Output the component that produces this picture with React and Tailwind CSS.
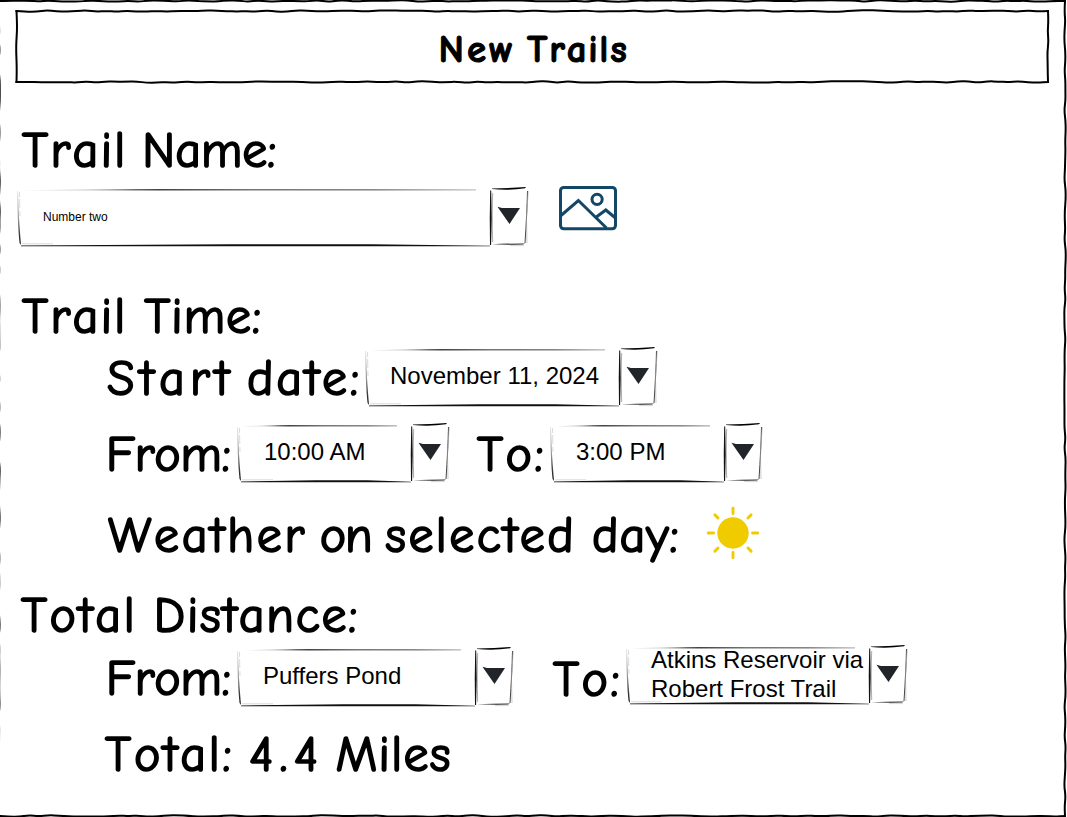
import React from "react";

const hand = "font-['Comic_Sans_MS','Comic_Neue',Inter,sans-serif] [font-kerning:none] [font-variant-ligatures:none] whitespace-nowrap";

// Deterministic wobble used for the hand-drawn outlines
function wobble(x1, y1, x2, y2, seed, amp = 0.8) {
  const len = Math.hypot(x2 - x1, y2 - y1);
  const n = Math.max(2, Math.round(len / 10));
  const vertical = x1 === x2;
  const pts = [];
  let s = seed;
  for (let i = 0; i <= n; i++) {
    s = (s * 16807) % 2147483647;
    const d = i === 0 || i === n ? 0 : (s / 2147483647 - 0.5) * 2 * amp;
    const x = x1 + ((x2 - x1) * i) / n + (vertical ? d : 0);
    const y = y1 + ((y2 - y1) * i) / n + (vertical ? 0 : d);
    pts.push([x, y]);
  }
  let path = `M${pts[0][0]} ${pts[0][1]}`;
  for (let i = 1; i < pts.length - 1; i++) {
    const mx = (pts[i][0] + pts[i + 1][0]) / 2;
    const my = (pts[i][1] + pts[i + 1][1]) / 2;
    path += ` Q${pts[i][0].toFixed(2)} ${pts[i][1].toFixed(2)} ${mx.toFixed(2)} ${my.toFixed(2)}`;
  }
  return path + ` L${x2} ${y2}`;
}

function SketchRect({ x, y, w, h, seed }) {
  return (
    <g fill="none" stroke="#000" strokeWidth="2" strokeLinecap="square">
      <path d={wobble(x, y, x + w, y, seed)} />
      <path d={wobble(x + w, y, x + w, y + h, seed + 911)} />
      <path d={wobble(x, y + h, x + w, y + h, seed + 2027)} />
      <path d={wobble(x, y, x, y + h, seed + 3511)} />
    </g>
  );
}

function Select({ id, w, children, textClass }) {
  const b = w;
  return (
    <div className="relative flex h-[58px] shrink-0">
      <svg className="absolute top-0 -left-px overflow-visible" width={w + 38} height="58">
        <defs>
          <linearGradient id={`${id}t`} gradientUnits="userSpaceOnUse" x1="0" x2={w} y1="0" y2="0">
            <stop offset="0" stopColor="#ddd" />
            <stop offset="0.15" stopColor="#bbb" />
            <stop offset="0.3" stopColor="#444" />
            <stop offset="0.5" stopColor="#777" />
            <stop offset="0.75" stopColor="#777" />
            <stop offset="1" stopColor="#ccc" />
          </linearGradient>
          <linearGradient id={`${id}l`} x1="0" x2="0" y1="0" y2="1">
            <stop offset="0" stopColor="#ddd" />
            <stop offset="0.5" stopColor="#999" />
            <stop offset="1" stopColor="#000" />
          </linearGradient>
        </defs>
        <path d={`M5 2.3L${w * 0.25} 1.1L${w * 0.5} 1.1L${w - 14} 1.2V2.6L${w * 0.55} 2.4L${w * 0.25} 2.5Z`} fill={`url(#${id}t)`} />
        <path d="M0.3 3L1 3Q1.6 30 3.9 57L2.6 55Q0.5 38 0.3 3Z" fill={`url(#${id}l)`} />
        <path d="M2.5 4L3 30" stroke="#ccc" strokeWidth="0.7" strokeDasharray="5 2 9 3" />
        <path d={`M4 57.5L${w * 0.45} 56.2L${w * 0.75} 56.2L${w} 57.7V58.3L${w * 0.6} 58.2L4 58.2Z`} fill="#111" />
        <path d="M5 55.8H36" stroke="#ccc" strokeWidth="0.7" />
        <path d={`M${b + 0.2} 2.5Q${b - 0.6} 30 ${b} 57L${b + 1.1} 57Q${b + 2.4} 30 ${b + 1.2} 2.5Z`} fill="#111" />
        <path d={`M${b + 2.7} 5Q${b + 1.8} 26 ${b + 2.7} 54`} stroke="#888" strokeWidth="0.7" fill="none" />
        <path d={`M${b + 2} 0.4Q${b + 20} 0.2 ${b + 36} -1L${b + 35} 0.3Q${b + 18} 2.8 ${b + 2} 1Z`} fill="#000" />
        <path d={`M${b + 37.5} 3Q${b + 37} 25 ${b + 35} 55`} stroke="#444" strokeWidth="1" fill="none" />
        <path d={`M${b + 38.3} 3Q${b + 35.2} 28 ${b + 37} 55`} stroke="#aaa" strokeWidth="0.6" fill="none" />
        <path d={`M${b + 2} 56.3Q${b + 18} 55.4 ${b + 35} 55.4L${b + 33} 56.6Q${b + 18} 57 ${b + 2} 56.3Z`} fill="#222" />
        <path d={`M${b + 20} 57.6H${b + 34}`} stroke="#bbb" strokeWidth="0.6" />
        <path d={`M${b + 7.5} 18.8L${b + 12} 20.1L${b + 30} 20.1L${b + 19.5} 36L${b + 9} 21Z`} fill="#212529" />
      </svg>
      <div
        className={`flex items-center font-['Liberation_Sans',Arial,sans-serif] whitespace-nowrap text-black ${textClass}`}
        style={{ width: w }}
      >
        {children}
      </div>
      <div className="w-[38px]" />
    </div>
  );
}

function PictureIcon() {
  return (
    <svg width="60" height="46" viewBox="0 0 60 46" fill="none" stroke="#134767" strokeWidth="3">
      <rect x="2.5" y="2.4" width="55" height="41.4" rx="3.2" />
      <path d="M3 30.5L20.4 15.5L48.5 43M38.3 32L47.8 25L57.5 33" />
      <circle cx="39.1" cy="14.3" r="5.1" />
    </svg>
  );
}

function SunIcon() {
  return (
    <svg width="54" height="54" viewBox="-27 -27 54 54" stroke="#f0cb00" strokeWidth="2.9" strokeLinecap="round">
      <circle r="15.7" fill="#f0cb00" stroke="none" />
      {[0, 90, 180, 270].map((a) => (
        <path key={a} d="M0 -19.5V-24.8" transform={`rotate(${a})`} />
      ))}
      {[45, 135, 225, 315].map((a) => (
        <path key={a} d="M0 -21.2V-25.6" transform={`rotate(${a})`} />
      ))}
    </svg>
  );
}

function Label({ className = "", children }) {
  return (
    <div
      className={`${hand} h-[58px] shrink-0 pt-[2px] text-[50px] leading-[58px] text-black [-webkit-text-stroke:1.7px_black] ${className}`}
    >
      {children}
    </div>
  );
}

export default function App() {
  return (
    <main className="relative h-[817px] w-[1067px] overflow-hidden bg-white">
      <svg className="absolute inset-0" width="1067" height="817">
        <SketchRect x={-1} y={1} w={1066} h={815} seed={7331} />
        <SketchRect x={16.5} y={11} w={1031.5} h={71} seed={4219} />
      </svg>
      <div className="relative flex flex-col">
        <header className="mx-4 mt-[11px] flex h-[71px] items-center justify-center">
          <h1 className={`${hand} mt-[7px] text-[39px] font-bold leading-[44px] text-black [-webkit-text-stroke:1px_black]`}>
            <span className="mr-[-3px] tracking-[3px]">New</span> <span className="tracking-[1.7px]">Trails</span>
          </h1>
        </header>

        <Label className="mt-[38px] ml-[22px]">
          <span className="mr-[-2px] tracking-[2.3px]">Trail</span> <span>Name:</span>
        </Label>
        <div className="mt-[10px] ml-[18px] flex">
          <Select id="name" w={473} textClass="pl-[25px] text-[12px]">Number two</Select>
          <div className="-mt-[3px] ml-[29px]">
            <PictureIcon />
          </div>
        </div>

        <Label className="mt-[40px] ml-[22px]">
          <span className="tracking-[2.3px]">Trail</span> <span className="tracking-[1px]">Time:</span>
        </Label>
        <div className="mt-[4px] flex pl-[107px]">
          <Label className="w-[259px]">
            <span className="mr-[-4px] tracking-[5.1px]">Start</span> <span className="tracking-[2.8px]">date:</span>
          </Label>
          <Select id="date" w={254} textClass="pb-[2px] pl-[24px] text-[24px]">November 11, 2024</Select>
        </div>
        <div className="mt-[18px] flex pl-[106px]">
          <Label className="w-[132px] tracking-[-0.2px]">From:</Label>
          <Select id="from" w={174} textClass="pb-[2px] pl-[26px] text-[24px]">10:00 AM</Select>
          <Label className="ml-[27px] w-[74px] tracking-[2.5px]">To:</Label>
          <Select id="to" w={174} textClass="pb-[2px] pl-[25px] text-[24px]">3:00 PM</Select>
        </div>
        <div className="mt-[23px] flex pl-[108px]">
          <Label className="w-[598px]">
            <span className="mr-[-4px] tracking-[2.7px]">Weather</span>{" "}
            <span className="mr-[-3px] tracking-[-1.2px]">on</span>{" "}
            <span className="mr-[-1px] tracking-[2.4px]">selected</span> <span className="tracking-[1px]">day:</span>
          </Label>
          <div className="mt-[1px]">
            <SunIcon />
          </div>
        </div>

        <Label className="mt-[22px] ml-[21px]">
          <span className="tracking-[2.5px]">Total</span> <span className="tracking-[1.75px]">Distance:</span>
        </Label>
        <div className="mt-[5px] flex pl-[106px]">
          <Label className="w-[132px] tracking-[-0.2px]">From:</Label>
          <Select id="start" w={238} textClass="pb-[2px] pl-[25px] text-[24px]">Puffers Pond</Select>
          <Label className="ml-[39px] w-[74px] pt-[3px] tracking-[2.5px]">To:</Label>
          <div className="-mt-[2px]">
            <Select id="end" w={243} textClass="pb-[2px] pl-[24px] text-[24px] leading-[29px]">
              <span>
                Atkins Reservoir via
                <br />
                Robert Frost Trail
              </span>
            </Select>
          </div>
        </div>
        <Label className="mt-[18px] ml-[105px]">
          <span className="mr-[-2px] tracking-[2.8px]">Total:</span>{" "}
          <span className="mr-[-6px] tracking-[6.5px]">4.4</span> <span className="tracking-[1.3px]">Miles</span>
        </Label>
      </div>
    </main>
  );
}
